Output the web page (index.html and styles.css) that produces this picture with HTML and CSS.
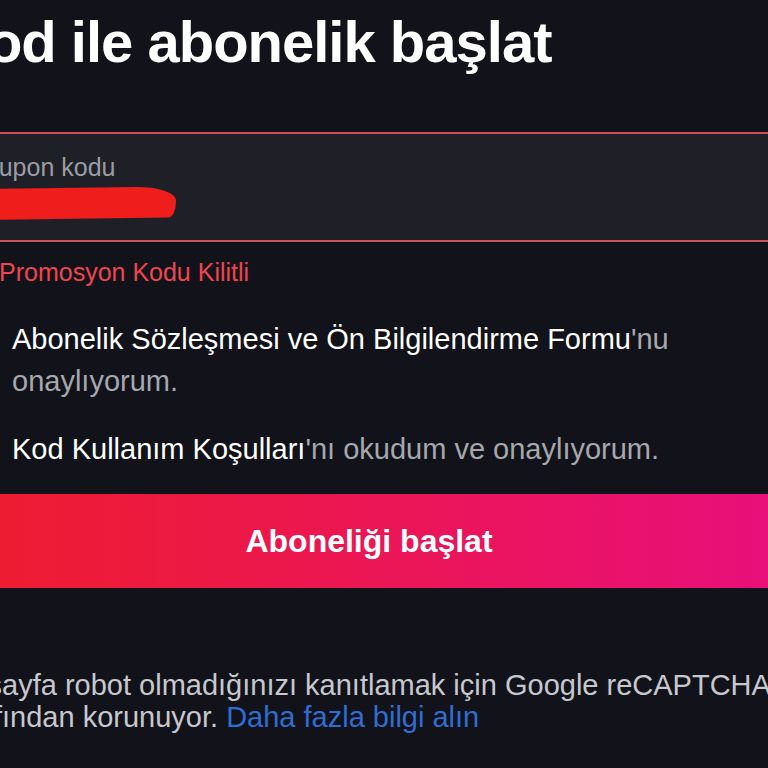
FILE: index.html
```html
<!DOCTYPE html>
<html lang="tr">
<head>
  <meta charset="UTF-8">
  <meta name="viewport" content="width=device-width, initial-scale=1.0">
  <title>Kod ile abonelik başlat</title>
  <link rel="stylesheet" href="styles.css">
</head>
<body>
  <div class="redeem">
    <h1 class="redeem-title">Kod ile abonelik başlat</h1>

    <div class="coupon-field">
      <label class="coupon-label">Kupon kodu</label>
      <div class="coupon-value"><span class="redact"></span></div>
    </div>

    <p class="field-error">
      <svg class="error-icon" viewBox="0 0 24 24" width="24" height="24">
        <circle cx="12" cy="12" r="10" fill="none" stroke="#f0454f" stroke-width="2"/>
        <path d="M12 7v6M12 16v1" stroke="#f0454f" stroke-width="2" stroke-linecap="round"/>
      </svg>
      Promosyon Kodu Kilitli
    </p>

    <div class="consents">
      <div class="consent">
        <span class="check"></span>
        <p><strong>Abonelik Sözleşmesi ve Ön Bilgilendirme Formu</strong>'nu onaylıyorum.</p>
      </div>
      <div class="consent">
        <span class="check"></span>
        <p><strong>Kod Kullanım Koşulları</strong>'nı okudum ve onaylıyorum.</p>
      </div>
    </div>

    <button class="submit-button">Aboneliği başlat</button>

    <p class="recaptcha-note">
      Bu sayfa robot olmadığınızı kanıtlamak için Google reCAPTCHA tarafından korunuyor.
      <a href="#">Daha fazla bilgi alın</a>
    </p>
  </div>
</body>
</html>
```

FILE: styles.css
```css
* {
  margin: 0;
  padding: 0;
  box-sizing: border-box;
}

body {
  font-family: 'Liberation Sans', Arial, sans-serif;
  background-color: #12131a;
  color: #ffffff;
  overflow: hidden;
}

.redeem {
  width: 846px;
  margin-left: -54px;
}

.redeem-title {
  font-size: 58px;
  font-weight: 700;
  letter-spacing: -1px;
  line-height: 70px;
  margin-top: 7px;
  margin-left: 0;
  color: #ffffff;
}

.coupon-field {
  margin-top: 55px;
  height: 110px;
  background-color: #1f2027;
  border-top: 2px solid #c9525d;
  border-bottom: 2px solid #c9525d;
  padding: 18px 36px 0;
}

.coupon-label {
  display: block;
  font-size: 25px;
  line-height: 30px;
  color: #9b9da4;
}

.coupon-value {
  margin-top: 6px;
}

.redact {
  display: block;
  width: 230px;
  height: 31px;
  margin-left: -36px;
  background-color: #f01d1d;
  border-radius: 2px 40px 8px 3px / 2px 14px 16px 3px;
  transform: rotate(-0.8deg);
}

.field-error {
  display: flex;
  align-items: center;
  gap: 29px;
  margin-top: 15px;
  font-size: 25px;
  line-height: 30px;
  color: #f0454f;
}

.consents {
  display: flex;
  flex-direction: column;
  gap: 26px;
  margin-top: 31px;
  margin-bottom: 24px;
}

.consent {
  display: flex;
  align-items: flex-start;
  gap: 34px;
}

.check {
  flex: 0 0 32px;
  height: 32px;
  margin-top: 5px;
  border: 2px solid #6c6e76;
  border-radius: 4px;
}

.consent p {
  font-size: 29px;
  line-height: 42px;
  color: #a6a8ae;
}

.consent strong {
  font-weight: 400;
  color: #ffffff;
}

.submit-button {
  display: block;
  width: 100%;
  height: 94px;
  border: none;
  background: linear-gradient(90deg, #ee1d2c, #e80f7c);
  color: #ffffff;
  font-family: inherit;
  font-size: 32px;
  font-weight: 700;
  cursor: pointer;
}

.recaptcha-note {
  margin-top: 81px;
  margin-left: -2px;
  font-size: 29px;
  line-height: 32px;
  color: #c7c8ce;
}

.recaptcha-note a {
  color: #2f6dd3;
  text-decoration: none;
}
```
